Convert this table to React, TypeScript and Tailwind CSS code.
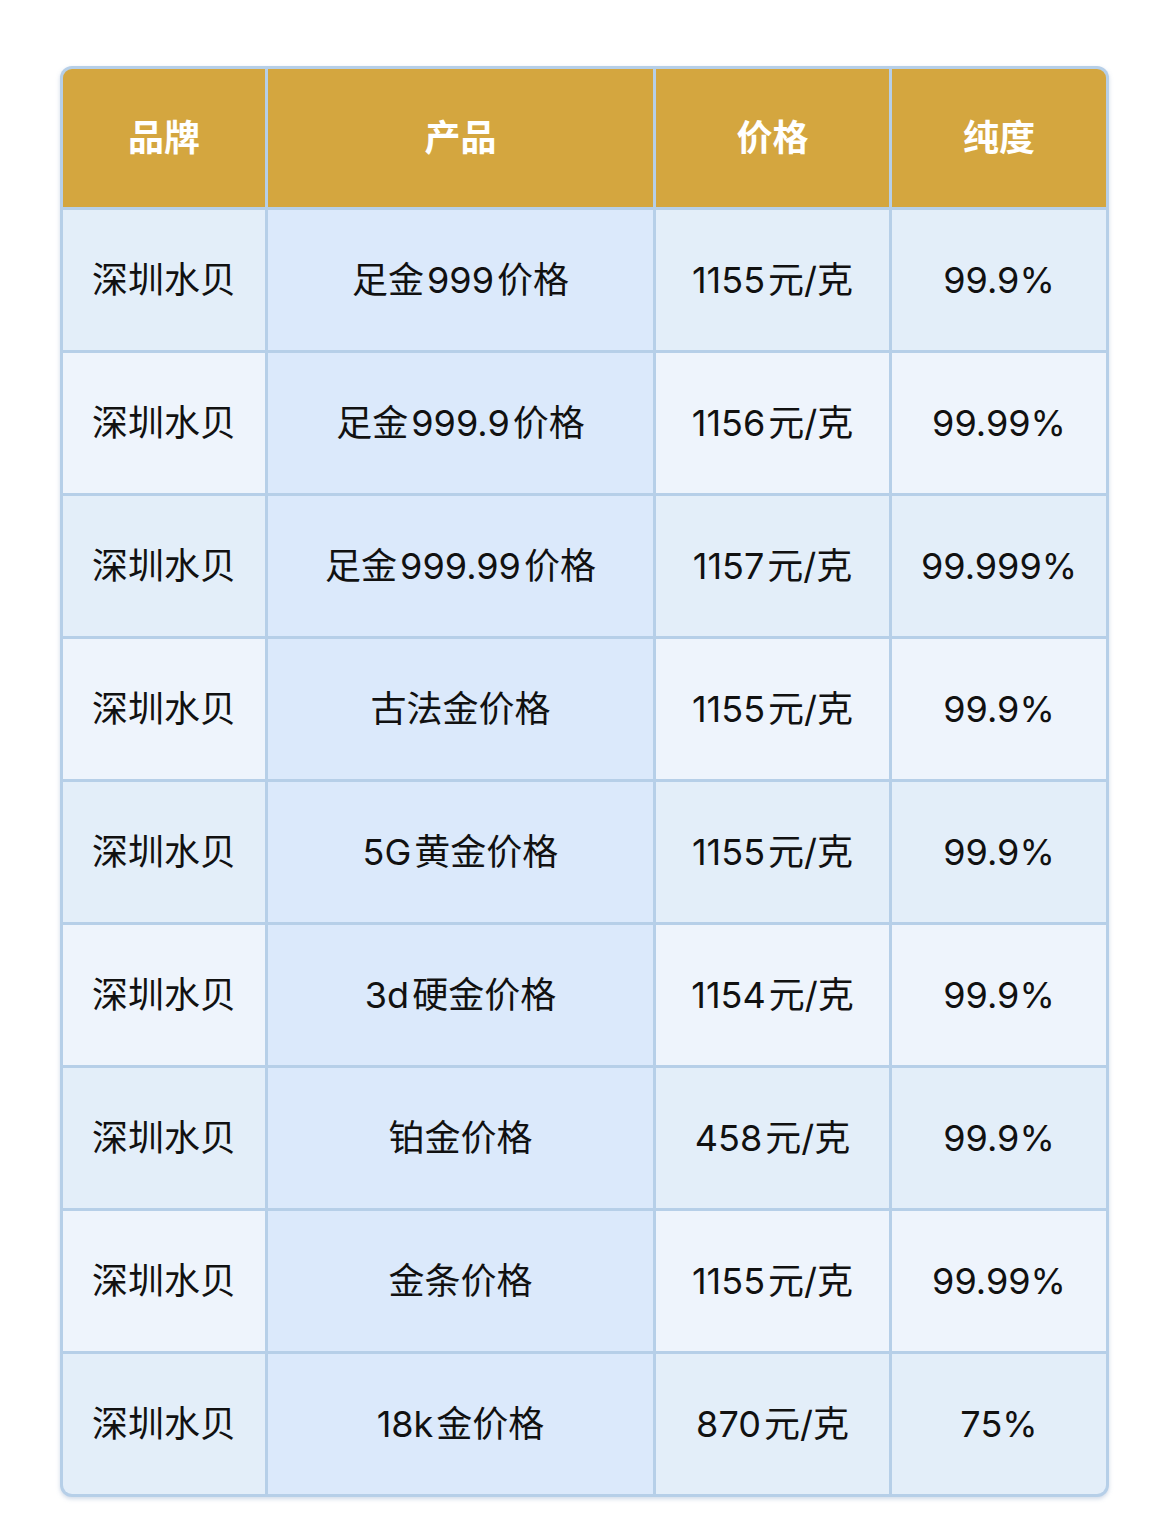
const rows: [string, string, string, string][] = [
  ["深圳水贝", "足金999价格", "1155元/克", "99.9%"],
  ["深圳水贝", "足金999.9价格", "1156元/克", "99.99%"],
  ["深圳水贝", "足金999.99价格", "1157元/克", "99.999%"],
  ["深圳水贝", "古法金价格", "1155元/克", "99.9%"],
  ["深圳水贝", "5G黄金价格", "1155元/克", "99.9%"],
  ["深圳水贝", "3d硬金价格", "1154元/克", "99.9%"],
  ["深圳水贝", "铂金价格", "458元/克", "99.9%"],
  ["深圳水贝", "金条价格", "1155元/克", "99.99%"],
  ["深圳水贝", "18k金价格", "870元/克", "75%"],
];

const headers = ["品牌", "产品", "价格", "纯度"];

// latin runs get a little air next to CJK, like the iOS text renderer does
function Cell({ text }: { text: string }) {
  const parts = text.split(/([0-9A-Za-z.%]+)/).filter((p) => p !== "");
  return (
    <>
      {parts.map((p, k) => {
        const latin = /^[0-9A-Za-z.%]+$/.test(p);
        if (!latin) return <span key={k}>{p}</span>;
        const left = k > 0;
        const right = k < parts.length - 1;
        return (
          <span key={k} className={`${left ? "ml-[3px]" : ""} ${right ? "mr-[3px]" : ""}`}>
            {p}
          </span>
        );
      })}
    </>
  );
}

export default function App() {
  return (
    <div
      className="w-[1170px] h-[1514px] bg-white pt-[66px] pl-[60px]"
      style={{ fontFamily: '"Inter", "Noto Sans CJK SC", sans-serif' }}
    >
      <div className="w-[1049px] rounded-[12px] bg-[#b6cfe8] p-[3px] shadow-[0_2px_4px_rgba(120,150,190,0.35)]">
        <div className="grid grid-cols-[202px_385px_233px_214px] gap-[3px] overflow-hidden rounded-[9px]">
          {headers.map((h) => (
            <div
              key={h}
              className="flex h-[138px] items-center justify-center bg-[#d4a63f] text-[36px] font-bold text-white"
            >
              {h}
            </div>
          ))}
          {rows.map((r, i) => {
            const base = i % 2 === 0 ? "bg-[#e3eef9]" : "bg-[#eef4fc]";
            return r.map((c, j) => (
              <div
                key={`${i}-${j}`}
                className={`flex h-[140px] items-center justify-center text-[36px] text-[#111111] ${
                  j === 1 ? "bg-[#dbe9fb]" : base
                }`}
              >
                <Cell text={c} />
              </div>
            ));
          })}
        </div>
      </div>
    </div>
  );
}
